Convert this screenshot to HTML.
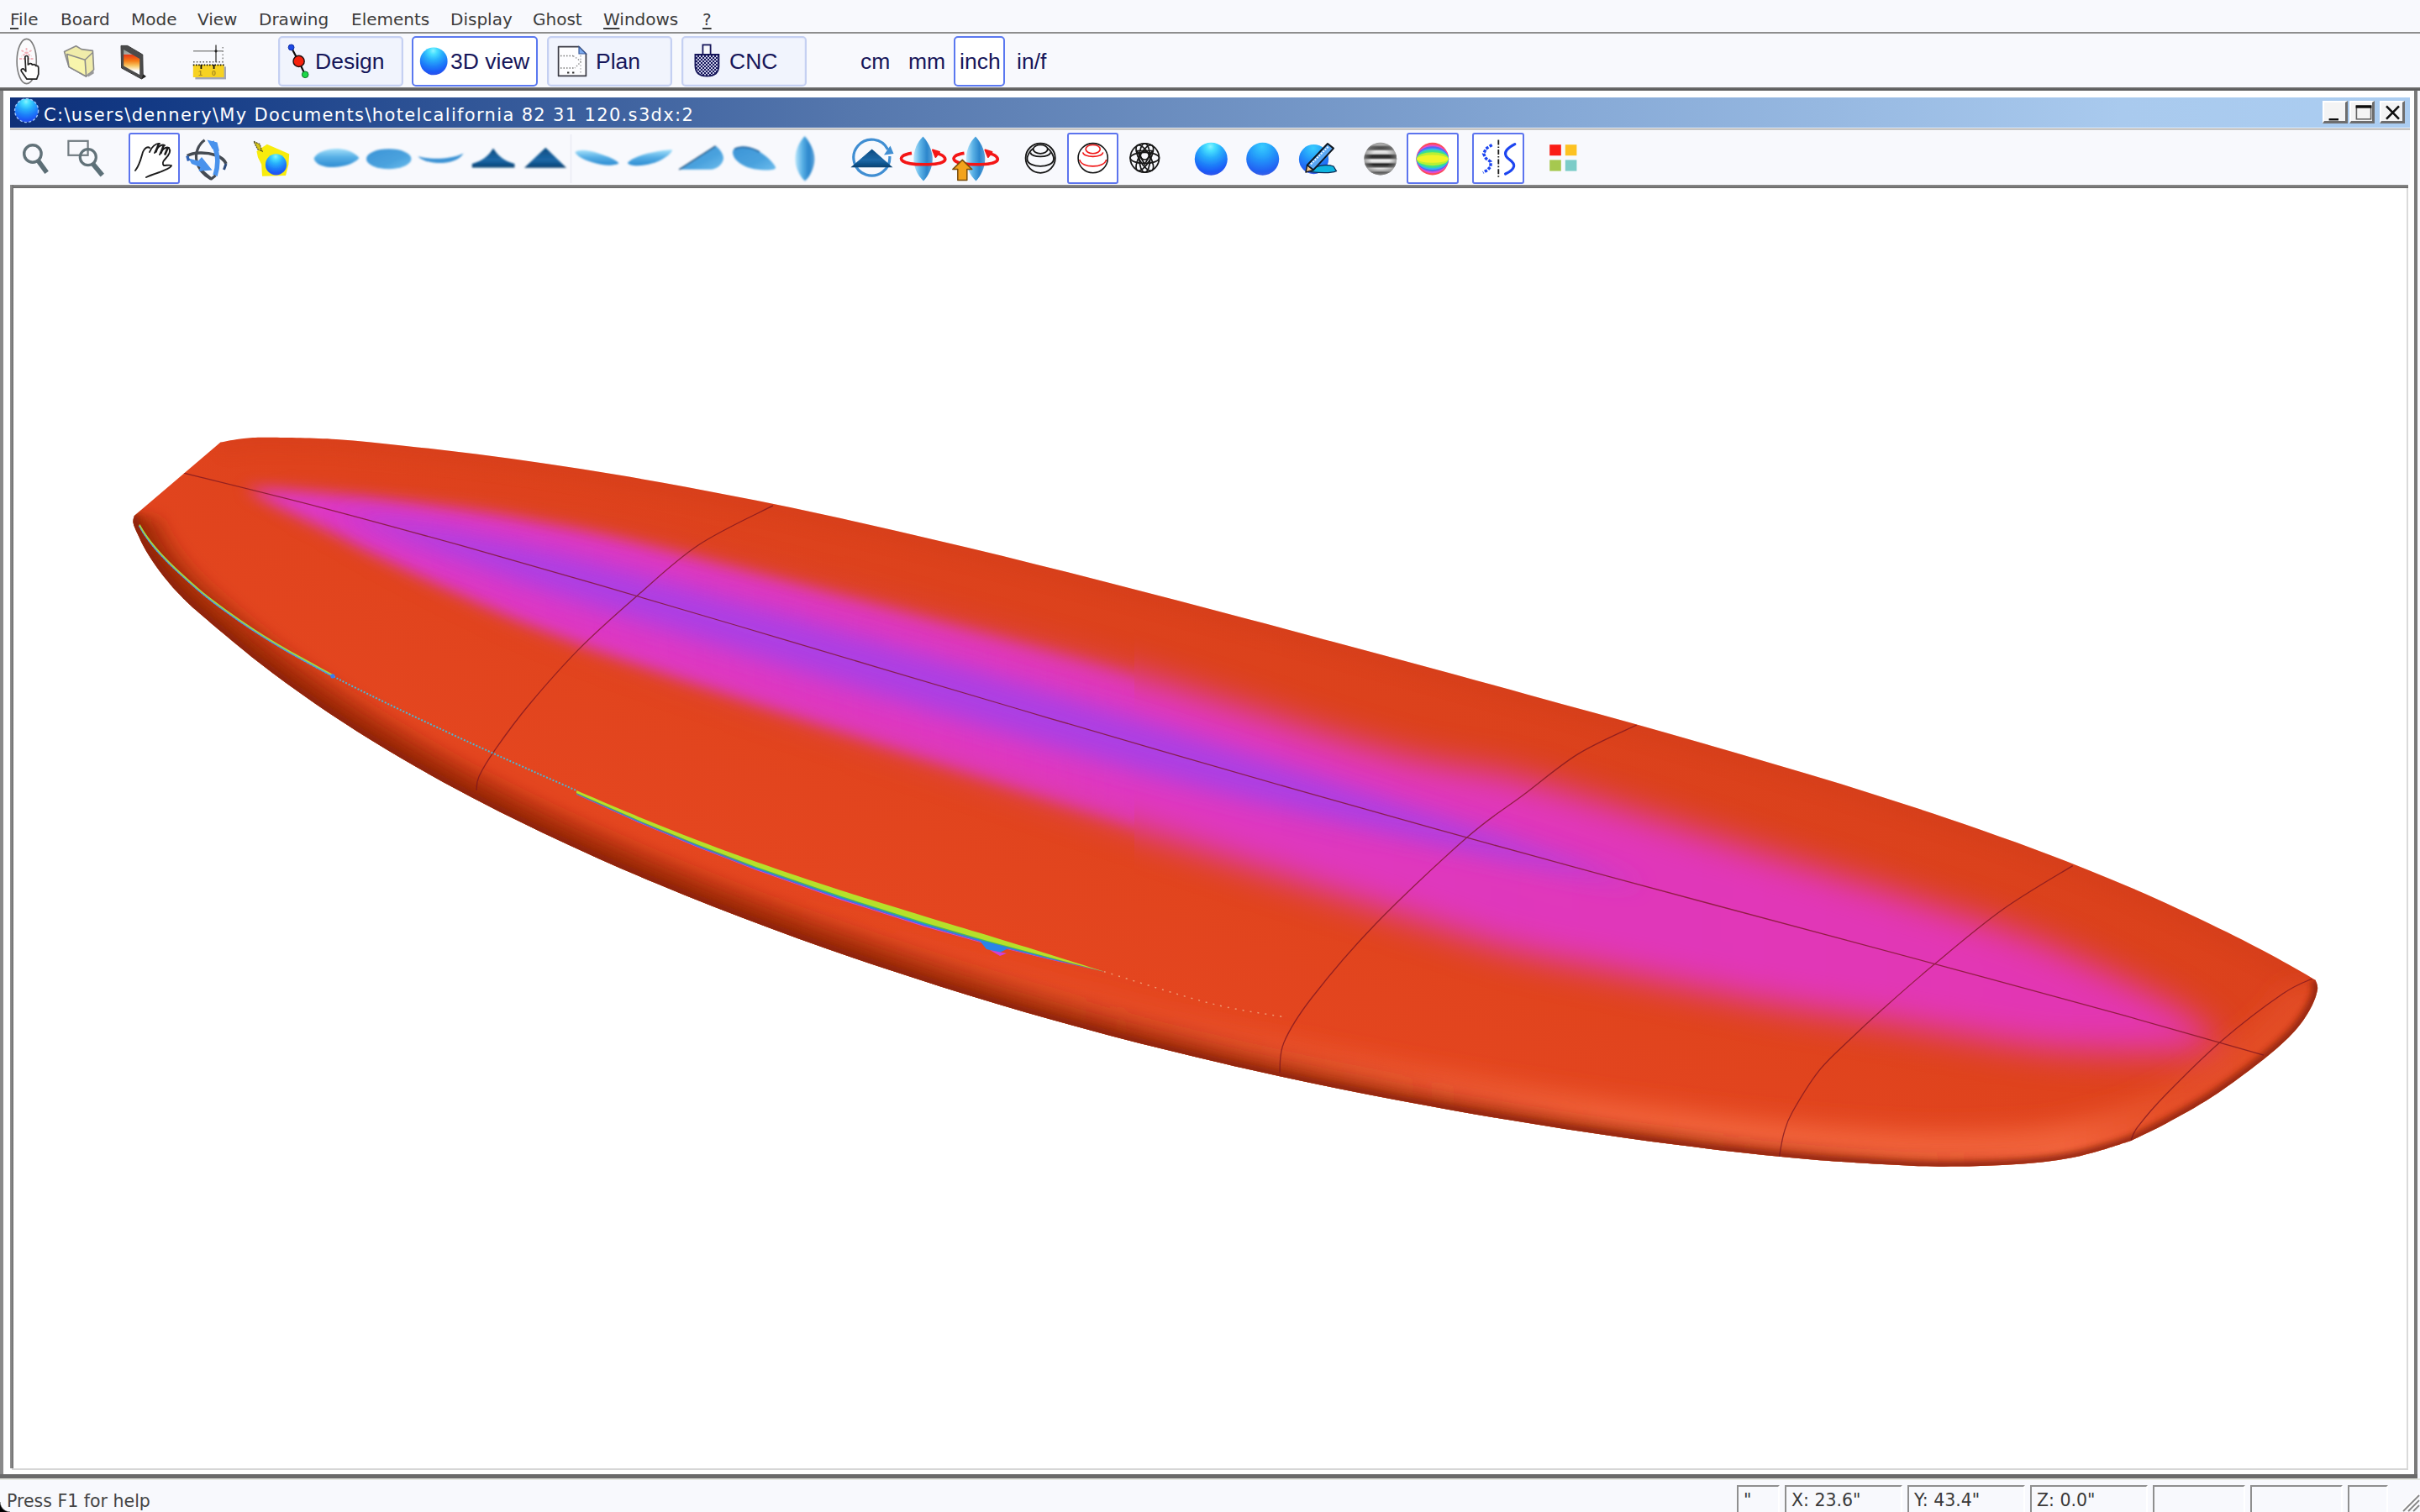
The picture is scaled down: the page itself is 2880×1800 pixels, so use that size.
<!DOCTYPE html>
<html lang="en">
<head>
<meta charset="utf-8">
<title>hotelcalifornia 82 31 120.s3dx - 3D view</title>
<style>
*{box-sizing:border-box;margin:0;padding:0}
html,body{width:2880px;height:1800px;overflow:hidden;background:#f8f9fd}
body{position:relative;font-family:"DejaVu Sans","Liberation Sans",sans-serif;color:#303030}
.abs{position:absolute}
#menubar{left:0;top:0;width:2880px;height:38px;background:#f8f9fd}
#menubar span{position:absolute;top:10px;font-size:20px;line-height:26px;color:#3c3c3c;white-space:nowrap}
#menubar u{text-decoration:underline;text-underline-offset:3px;text-decoration-thickness:2px}
#menusep{left:0;top:38px;width:2880px;height:2px;background:#8e8e8e}
#tb1{left:0;top:40px;width:2880px;height:64px;background:#f8f9fd}
.tbtn{position:absolute;top:43px;height:60px;border:2px solid #c5d0f2;border-radius:5px;background:#f1f4fd;box-shadow:inset 0 0 0 1px #e6ebfb}
.tbtn.sel{border:2px solid #5a78f0;background:#fff;box-shadow:none}
.tlabel{position:absolute;font-family:"Liberation Sans",sans-serif;font-size:26.5px;line-height:30px;color:#16165a;white-space:nowrap;top:58px}
#tb1sep{left:0;top:104px;width:2880px;height:4px;background:linear-gradient(#787878,#5c5c5c 60%,#6c6c6c)}
#frameL{left:0;top:108px;width:4px;height:1652px;background:#8a8a8a}
#frameR{left:2873px;top:108px;width:4px;height:1652px;background:#7a7a7a}
#frameB{left:0;top:1755px;width:2877px;height:5px;background:#6a6a6a}
#childbg{left:4px;top:108px;width:2869px;height:1647px;background:#fff}
#title{left:12px;top:116px;width:2856px;height:36px;background:linear-gradient(90deg,#0e3079 0%,#133a85 6%,#5577ad 35%,#86a9d6 65%,#a9caee 88%,#abcdf1 100%)}
#titletext{left:52px;top:123px;font-size:21px;line-height:28px;color:#fff;white-space:pre;letter-spacing:1.34px}
#titleline{left:12px;top:152px;width:2856px;height:3px;background:linear-gradient(#fff,#fff 34%,#9a9a9a 34%,#9a9a9a 67%,#dcdcdc 67%)}
.wbtn{position:absolute;top:120px;width:30px;height:27px;background:#f4f4f4;border-top:2px solid #fff;border-left:2px solid #fff;border-right:3px solid #6e6e6e;border-bottom:3px solid #6e6e6e}
#tb2{left:12px;top:155px;width:2856px;height:65px;background:#f8f9fd}
.selbox{position:absolute;top:158px;height:61px;border:2.5px solid #5c74ee;border-radius:3px;background:#fff}
#vpT{left:12px;top:220px;width:2854px;height:4px;background:linear-gradient(#8c8c8c,#686868)}
#vpL{left:12px;top:220px;width:4px;height:1528px;background:linear-gradient(90deg,#969696,#6c6c6c)}
#vpR{left:2864px;top:224px;width:2px;height:1526px;background:#dadada}
#vpB{left:14px;top:1748px;width:2852px;height:2px;background:#d6d6d6}
#vp{left:16px;top:224px;width:2848px;height:1524px;background:#fff;overflow:hidden}
#status{left:0;top:1762px;width:2880px;height:38px;background:#f8f9fd}
#statusline{left:0;top:1760px;width:2880px;height:2px;background:#e4e6e0}
#stext{left:8px;top:1773.5px;font-size:20.5px;line-height:26px;color:#444;white-space:nowrap}
.pane{position:absolute;top:1768px;height:32px;border-top:2px solid #8f8f8f;border-left:2px solid #8f8f8f;border-right:2px solid #fff;font-size:20.5px;line-height:26px;padding:3px 0 0 6px;color:#3a3a3a;white-space:nowrap;overflow:hidden}
#corner{left:0;top:1788px;width:12px;height:12px;background:radial-gradient(circle at 12px 0px,rgba(0,0,0,0) 11px,#000 12.5px)}
svg{position:absolute;overflow:visible}
</style>
</head>
<body>
<div id="menubar" class="abs">
<span style="left:12px"><u>F</u>ile</span>
<span style="left:72px">Board</span>
<span style="left:156px">Mode</span>
<span style="left:235px">View</span>
<span style="left:308px">Drawing</span>
<span style="left:418px">Elements</span>
<span style="left:536px">Display</span>
<span style="left:634px">Ghost</span>
<span style="left:718px"><u>W</u>indows</span>
<span style="left:836px"><u>?</u></span>
</div>
<div id="menusep" class="abs"></div>
<div id="tb1" class="abs"></div>
<div class="tbtn" style="left:331px;width:149px"></div>
<div class="tbtn sel" style="left:490px;width:150px"></div>
<div class="tbtn" style="left:651px;width:149px"></div>
<div class="tbtn" style="left:811px;width:149px"></div>
<div class="tbtn sel" style="left:1135px;width:61px"></div>
<div class="tlabel" style="left:375px">Design</div>
<div class="tlabel" style="left:536px">3D view</div>
<div class="tlabel" style="left:709px">Plan</div>
<div class="tlabel" style="left:868px">CNC</div>
<div class="tlabel" style="left:1024px">cm</div>
<div class="tlabel" style="left:1081px">mm</div>
<div class="tlabel" style="left:1142px">inch</div>
<div class="tlabel" style="left:1210px">in/f</div>
<div id="tb1sep" class="abs"></div>
<div id="childbg" class="abs"></div>
<div id="frameL" class="abs"></div>
<div id="frameR" class="abs"></div>
<div id="frameB" class="abs"></div>
<div id="title" class="abs"></div>
<div id="titletext" class="abs">C:\users\dennery\My Documents\hotelcalifornia 82 31 120.s3dx:2</div>
<div id="titleline" class="abs"></div>
<div class="wbtn" style="left:2764px"></div>
<div class="wbtn" style="left:2796px"></div>
<div class="wbtn" style="left:2832px"></div>
<div id="tb2" class="abs"></div>
<div class="selbox" style="left:153px;width:61px"></div>
<div class="selbox" style="left:1270px;width:61px"></div>
<div class="selbox" style="left:1674px;width:62px"></div>
<div class="selbox" style="left:1752px;width:62px"></div>
<div id="vpT" class="abs"></div>
<div id="vpL" class="abs"></div>
<div id="vpR" class="abs"></div>
<div id="vpB" class="abs"></div>
<div id="vp" class="abs"></div>
<div id="statusline" class="abs"></div>
<div id="status" class="abs"></div>
<div id="stext" class="abs">Press F1 for help</div>
<div class="pane" style="left:2067px;width:51px">&quot;</div>
<div class="pane" style="left:2124px;width:140px">X: 23.6&quot;</div>
<div class="pane" style="left:2270px;width:140px">Y: 43.4&quot;</div>
<div class="pane" style="left:2416px;width:140px">Z: 0.0&quot;</div>
<div class="pane" style="left:2562px;width:110px"></div>
<div class="pane" style="left:2678px;width:110px"></div>
<div class="pane" style="left:2794px;width:48px"></div>
<div id="corner" class="abs"></div>
<svg width="24" height="24" viewBox="0 0 24 24" style="left:2856px;top:1776px"><path d="M4 23 L23 4 M10 23 L23 10 M16 23 L23 16" stroke="#8a8a8a" stroke-width="2.200"/><path d="M2.500 22 L22 2.500 M8.500 22 L22 8.500 M14.500 22 L22 14.500" stroke="#ffffff" stroke-width="1.400"/></svg>
<svg id="board" width="2880" height="1800" viewBox="0 0 2880 1800" style="left:0;top:0">
<defs>
<clipPath id="bclip"><path d="M262.4 526.5 C267.0 525.8 280.1 523.0 290.0 522.0 C299.9 521.0 303.7 520.5 322.0 520.7 C340.3 520.9 373.1 521.2 400.0 522.9 C426.9 524.6 455.6 527.9 483.3 530.9 C511.1 533.8 538.9 537.0 566.7 540.6 C594.4 544.1 622.2 547.9 650.0 552.0 C677.8 556.1 705.6 560.4 733.3 565.1 C761.1 569.7 788.9 574.6 816.7 579.7 C844.4 584.9 872.2 590.3 900.0 595.8 C927.8 601.4 955.6 607.3 983.3 613.3 C1011.1 619.3 1038.9 625.5 1066.7 631.9 C1094.4 638.2 1122.2 644.8 1150.0 651.5 C1177.8 658.1 1205.6 665.0 1233.3 671.9 C1261.1 678.8 1288.9 685.8 1316.7 692.9 C1344.4 700.0 1372.2 707.3 1400.0 714.5 C1427.8 721.8 1455.6 729.1 1483.3 736.5 C1511.1 743.8 1538.9 751.2 1566.7 758.7 C1594.4 766.1 1622.2 773.6 1650.0 781.1 C1677.8 788.6 1705.6 796.1 1733.3 803.6 C1761.1 811.2 1788.9 818.8 1816.7 826.4 C1844.4 834.0 1872.2 841.6 1900.0 849.3 C1927.8 857.0 1955.6 864.7 1983.3 872.6 C2011.1 880.4 2038.9 888.3 2066.7 896.4 C2094.4 904.5 2122.2 912.6 2150.0 921.0 C2177.8 929.3 2205.6 937.8 2233.3 946.7 C2261.1 955.5 2288.9 964.4 2316.7 973.9 C2344.4 983.3 2372.2 992.9 2400.0 1003.1 C2427.8 1013.3 2455.6 1023.8 2483.3 1035.0 C2511.1 1046.1 2538.9 1057.7 2566.7 1070.2 C2594.4 1082.6 2625.0 1097.2 2650.0 1109.6 C2675.0 1121.9 2699.1 1134.9 2716.7 1144.4 C2734.3 1153.9 2749.1 1163.0 2755.6 1166.7 C2756.0 1168.6 2758.9 1172.5 2758.0 1178.0 C2757.1 1183.5 2754.6 1191.7 2750.0 1200.0 C2745.4 1208.3 2739.9 1217.6 2730.6 1227.8 C2721.3 1238.0 2710.3 1248.0 2694.0 1261.0 C2677.7 1274.0 2652.4 1292.8 2633.0 1305.6 C2613.6 1318.3 2594.0 1328.8 2577.8 1337.5 C2561.6 1346.2 2543.0 1354.6 2536.0 1358.0 C2530.0 1359.9 2511.6 1366.2 2500.0 1369.5 C2488.4 1372.8 2478.4 1375.7 2466.7 1378.0 C2455.0 1380.3 2443.9 1382.0 2430.0 1383.5 C2416.1 1385.0 2399.7 1386.2 2383.0 1387.0 C2366.3 1387.8 2347.5 1388.4 2330.0 1388.6 C2312.5 1388.8 2299.5 1388.8 2277.8 1388.0 C2256.1 1387.2 2224.2 1385.3 2200.0 1383.6 C2175.8 1382.0 2154.9 1380.3 2132.4 1378.2 C2109.9 1376.2 2087.4 1373.8 2064.8 1371.3 C2042.3 1368.8 2019.8 1366.0 1997.2 1363.1 C1974.7 1360.2 1952.2 1357.2 1929.7 1354.0 C1907.1 1350.8 1884.6 1347.4 1862.1 1344.0 C1839.5 1340.5 1817.0 1336.9 1794.5 1333.1 C1772.0 1329.4 1749.4 1325.5 1726.9 1321.5 C1704.4 1317.5 1681.8 1313.3 1659.3 1309.1 C1636.8 1304.8 1614.3 1300.3 1591.7 1295.7 C1569.2 1291.2 1546.7 1286.4 1524.1 1281.5 C1501.6 1276.6 1479.1 1271.6 1456.6 1266.3 C1434.0 1261.1 1411.5 1255.7 1389.0 1250.1 C1366.4 1244.6 1343.9 1238.8 1321.4 1232.9 C1298.9 1226.9 1276.3 1220.8 1253.8 1214.5 C1231.3 1208.2 1208.7 1201.7 1186.2 1195.0 C1163.7 1188.2 1141.1 1181.3 1118.6 1174.2 C1096.1 1167.1 1073.6 1159.8 1051.0 1152.3 C1028.5 1144.8 1006.0 1137.1 983.4 1129.2 C960.9 1121.2 938.4 1113.1 915.9 1104.7 C893.3 1096.3 870.8 1087.7 848.3 1078.9 C825.7 1070.0 803.2 1060.9 780.7 1051.5 C758.2 1042.1 735.6 1032.4 713.1 1022.4 C690.6 1012.3 668.0 1002.0 645.5 991.3 C623.0 980.5 600.5 969.5 577.9 957.8 C555.4 946.2 532.9 934.2 510.3 921.5 C487.8 908.9 465.3 895.7 442.8 881.8 C420.2 867.8 397.7 853.2 375.2 837.7 C352.6 822.1 330.1 805.8 307.6 788.3 C285.1 770.7 255.9 746.0 240.0 732.3 C224.1 718.6 220.4 714.8 212.0 706.0 C203.6 697.2 196.0 687.7 189.7 679.4 C183.4 671.1 178.3 663.2 174.0 656.0 C169.7 648.8 166.6 641.6 164.0 636.0 C161.4 630.4 159.3 626.1 158.6 622.4 C157.9 618.7 159.6 615.4 159.8 614.0 Z"/></clipPath>
<linearGradient id="deck" gradientUnits="userSpaceOnUse" x1="1500" y1="650" x2="1250" y2="1350">
<stop offset="0" stop-color="#da411c"/><stop offset="0.4" stop-color="#df431d"/><stop offset="0.75" stop-color="#e4461f"/><stop offset="1" stop-color="#e74a23"/>
</linearGradient>
<linearGradient id="bandg" gradientUnits="userSpaceOnUse" x1="300" y1="0" x2="2650" y2="0">
<stop offset="0" stop-color="#dc38c8"/><stop offset="0.5" stop-color="#de38c0"/><stop offset="1" stop-color="#e336b0"/>
</linearGradient>
<linearGradient id="hl" gradientUnits="userSpaceOnUse" x1="900" y1="0" x2="2760" y2="0">
<stop offset="0" stop-color="#f4683f" stop-opacity="0"/><stop offset="0.3" stop-color="#f4683f" stop-opacity="0.4"/><stop offset="0.6" stop-color="#f4683f" stop-opacity="0.85"/><stop offset="0.84" stop-color="#f4683f" stop-opacity="0.85"/><stop offset="0.9" stop-color="#f4683f" stop-opacity="0.3"/><stop offset="1" stop-color="#f4683f" stop-opacity="0.25"/>
</linearGradient>
<linearGradient id="dk" gradientUnits="userSpaceOnUse" x1="150" y1="0" x2="1900" y2="0">
<stop offset="0" stop-color="#8c2408" stop-opacity="0.55"/><stop offset="0.5" stop-color="#8c2408" stop-opacity="0.5"/><stop offset="1" stop-color="#8c2408" stop-opacity="0"/>
</linearGradient>
<linearGradient id="dk2" gradientUnits="userSpaceOnUse" x1="150" y1="0" x2="2450" y2="0">
<stop offset="0" stop-color="#8c2408" stop-opacity="0.5"/><stop offset="0.5" stop-color="#8c2408" stop-opacity="0.48"/><stop offset="0.8" stop-color="#8c2408" stop-opacity="0.4"/><stop offset="1" stop-color="#8c2408" stop-opacity="0"/>
</linearGradient>
<filter id="bl6" x="-10%" y="-30%" width="120%" height="160%"><feGaussianBlur stdDeviation="6"/></filter>
<filter id="vblur" filterUnits="userSpaceOnUse" x="-2000" y="300" width="6000" height="1300" color-interpolation-filters="sRGB">
<feGaussianBlur in="SourceGraphic" stdDeviation="9" result="b1"/>
<feGaussianBlur in="SourceGraphic" stdDeviation="21" result="b2"/>
<feFlood flood-color="#000" flood-opacity="1" x="-2000" y="300" width="3350" height="1300" result="f"/>
<feGaussianBlur in="f" stdDeviation="520 0" result="mA"/>
<feComposite in="b1" in2="mA" operator="in" result="p1"/>
<feComposite in="b2" in2="mA" operator="out" result="p2"/>
<feComposite in="p1" in2="p2" operator="arithmetic" k1="0" k2="1" k3="1" k4="0"/>
</filter>
<filter id="bl14" x="-10%" y="-30%" width="120%" height="160%"><feGaussianBlur stdDeviation="14"/></filter>
<filter id="bl18" x="-10%" y="-30%" width="120%" height="160%"><feGaussianBlur stdDeviation="16"/></filter>
<filter id="bl10" x="-10%" y="-30%" width="120%" height="160%"><feGaussianBlur stdDeviation="9"/></filter>
<filter id="bl4" x="-10%" y="-30%" width="120%" height="160%"><feGaussianBlur stdDeviation="3.5"/></filter>
</defs>
<path d="M262.4 526.5 C267.0 525.8 280.1 523.0 290.0 522.0 C299.9 521.0 303.7 520.5 322.0 520.7 C340.3 520.9 373.1 521.2 400.0 522.9 C426.9 524.6 455.6 527.9 483.3 530.9 C511.1 533.8 538.9 537.0 566.7 540.6 C594.4 544.1 622.2 547.9 650.0 552.0 C677.8 556.1 705.6 560.4 733.3 565.1 C761.1 569.7 788.9 574.6 816.7 579.7 C844.4 584.9 872.2 590.3 900.0 595.8 C927.8 601.4 955.6 607.3 983.3 613.3 C1011.1 619.3 1038.9 625.5 1066.7 631.9 C1094.4 638.2 1122.2 644.8 1150.0 651.5 C1177.8 658.1 1205.6 665.0 1233.3 671.9 C1261.1 678.8 1288.9 685.8 1316.7 692.9 C1344.4 700.0 1372.2 707.3 1400.0 714.5 C1427.8 721.8 1455.6 729.1 1483.3 736.5 C1511.1 743.8 1538.9 751.2 1566.7 758.7 C1594.4 766.1 1622.2 773.6 1650.0 781.1 C1677.8 788.6 1705.6 796.1 1733.3 803.6 C1761.1 811.2 1788.9 818.8 1816.7 826.4 C1844.4 834.0 1872.2 841.6 1900.0 849.3 C1927.8 857.0 1955.6 864.7 1983.3 872.6 C2011.1 880.4 2038.9 888.3 2066.7 896.4 C2094.4 904.5 2122.2 912.6 2150.0 921.0 C2177.8 929.3 2205.6 937.8 2233.3 946.7 C2261.1 955.5 2288.9 964.4 2316.7 973.9 C2344.4 983.3 2372.2 992.9 2400.0 1003.1 C2427.8 1013.3 2455.6 1023.8 2483.3 1035.0 C2511.1 1046.1 2538.9 1057.7 2566.7 1070.2 C2594.4 1082.6 2625.0 1097.2 2650.0 1109.6 C2675.0 1121.9 2699.1 1134.9 2716.7 1144.4 C2734.3 1153.9 2749.1 1163.0 2755.6 1166.7 C2756.0 1168.6 2758.9 1172.5 2758.0 1178.0 C2757.1 1183.5 2754.6 1191.7 2750.0 1200.0 C2745.4 1208.3 2739.9 1217.6 2730.6 1227.8 C2721.3 1238.0 2710.3 1248.0 2694.0 1261.0 C2677.7 1274.0 2652.4 1292.8 2633.0 1305.6 C2613.6 1318.3 2594.0 1328.8 2577.8 1337.5 C2561.6 1346.2 2543.0 1354.6 2536.0 1358.0 C2530.0 1359.9 2511.6 1366.2 2500.0 1369.5 C2488.4 1372.8 2478.4 1375.7 2466.7 1378.0 C2455.0 1380.3 2443.9 1382.0 2430.0 1383.5 C2416.1 1385.0 2399.7 1386.2 2383.0 1387.0 C2366.3 1387.8 2347.5 1388.4 2330.0 1388.6 C2312.5 1388.8 2299.5 1388.8 2277.8 1388.0 C2256.1 1387.2 2224.2 1385.3 2200.0 1383.6 C2175.8 1382.0 2154.9 1380.3 2132.4 1378.2 C2109.9 1376.2 2087.4 1373.8 2064.8 1371.3 C2042.3 1368.8 2019.8 1366.0 1997.2 1363.1 C1974.7 1360.2 1952.2 1357.2 1929.7 1354.0 C1907.1 1350.8 1884.6 1347.4 1862.1 1344.0 C1839.5 1340.5 1817.0 1336.9 1794.5 1333.1 C1772.0 1329.4 1749.4 1325.5 1726.9 1321.5 C1704.4 1317.5 1681.8 1313.3 1659.3 1309.1 C1636.8 1304.8 1614.3 1300.3 1591.7 1295.7 C1569.2 1291.2 1546.7 1286.4 1524.1 1281.5 C1501.6 1276.6 1479.1 1271.6 1456.6 1266.3 C1434.0 1261.1 1411.5 1255.7 1389.0 1250.1 C1366.4 1244.6 1343.9 1238.8 1321.4 1232.9 C1298.9 1226.9 1276.3 1220.8 1253.8 1214.5 C1231.3 1208.2 1208.7 1201.7 1186.2 1195.0 C1163.7 1188.2 1141.1 1181.3 1118.6 1174.2 C1096.1 1167.1 1073.6 1159.8 1051.0 1152.3 C1028.5 1144.8 1006.0 1137.1 983.4 1129.2 C960.9 1121.2 938.4 1113.1 915.9 1104.7 C893.3 1096.3 870.8 1087.7 848.3 1078.9 C825.7 1070.0 803.2 1060.9 780.7 1051.5 C758.2 1042.1 735.6 1032.4 713.1 1022.4 C690.6 1012.3 668.0 1002.0 645.5 991.3 C623.0 980.5 600.5 969.5 577.9 957.8 C555.4 946.2 532.9 934.2 510.3 921.5 C487.8 908.9 465.3 895.7 442.8 881.8 C420.2 867.8 397.7 853.2 375.2 837.7 C352.6 822.1 330.1 805.8 307.6 788.3 C285.1 770.7 255.9 746.0 240.0 732.3 C224.1 718.6 220.4 714.8 212.0 706.0 C203.6 697.2 196.0 687.7 189.7 679.4 C183.4 671.1 178.3 663.2 174.0 656.0 C169.7 648.8 166.6 641.6 164.0 636.0 C161.4 630.4 159.3 626.1 158.6 622.4 C157.9 618.7 159.6 615.4 159.8 614.0 Z" fill="url(#deck)"/>
<g clip-path="url(#bclip)">
<path d="M292.0 581.5 C298.3 581.6 312.0 581.0 330.0 582.1 C348.0 583.1 381.7 586.4 400.0 588.0 C418.3 589.6 416.7 589.2 440.0 591.9 C463.3 594.6 506.7 599.3 540.0 604.1 C573.3 608.9 596.7 611.9 640.0 620.6 C683.3 629.2 690.0 628.1 800.0 656.0 C910.0 683.9 1166.7 750.6 1300.0 787.9 C1433.3 825.3 1533.3 860.5 1600.0 880.2 C1666.7 900.0 1666.7 899.1 1700.0 906.4 C1733.3 913.7 1761.7 914.8 1800.0 923.9 C1838.3 933.1 1880.0 946.2 1930.0 961.4 C1980.0 976.7 2045.0 998.1 2100.0 1015.3 C2155.0 1032.4 2210.0 1048.4 2260.0 1064.2 C2310.0 1080.0 2363.3 1096.7 2400.0 1110.0 C2436.7 1123.2 2448.3 1129.1 2480.0 1143.8 C2511.7 1158.6 2562.5 1182.2 2590.0 1198.6 C2617.5 1214.9 2635.8 1234.9 2645.0 1242.2 C2635.8 1243.9 2617.5 1250.9 2590.0 1252.6 C2562.5 1254.2 2511.7 1253.3 2480.0 1251.8 C2448.3 1250.4 2436.7 1249.2 2400.0 1244.0 C2363.3 1238.7 2310.0 1228.5 2260.0 1220.2 C2210.0 1211.9 2155.0 1204.4 2100.0 1194.3 C2045.0 1184.1 1980.0 1169.8 1930.0 1159.4 C1880.0 1149.1 1838.3 1141.8 1800.0 1131.9 C1761.7 1122.1 1733.3 1111.0 1700.0 1100.4 C1666.7 1089.8 1666.7 1090.0 1600.0 1068.2 C1533.3 1046.5 1433.3 1013.6 1300.0 969.9 C1166.7 926.2 910.0 842.9 800.0 806.0 C690.0 769.1 683.3 765.4 640.0 748.6 C596.7 731.7 573.3 720.2 540.0 705.1 C506.7 690.0 463.3 669.2 440.0 657.9 C416.7 646.5 418.3 646.1 400.0 637.0 C381.7 627.9 348.0 612.3 330.0 603.1 C312.0 593.8 298.3 585.1 292.0 581.5 Z" fill="url(#bandg)" filter="url(#vblur)"/>
<path d="M400.0 609.0 C411.7 610.7 443.3 614.6 470.0 619.0 C496.7 623.5 521.7 627.6 560.0 635.7 C598.3 643.8 626.7 648.5 700.0 667.7 C773.3 687.0 900.0 722.5 1000.0 751.2 C1100.0 779.9 1216.7 814.7 1300.0 839.9 C1383.3 865.2 1433.3 881.4 1500.0 902.9 C1566.7 924.3 1641.7 949.2 1700.0 968.4 C1758.3 987.5 1806.7 1003.2 1850.0 1017.7 C1893.3 1032.2 1941.7 1049.3 1960.0 1055.6 C1941.7 1052.1 1893.3 1043.6 1850.0 1034.7 C1806.7 1025.8 1758.3 1015.5 1700.0 1002.4 C1641.7 989.2 1566.7 972.4 1500.0 955.9 C1433.3 939.3 1383.3 926.7 1300.0 902.9 C1216.7 879.2 1100.0 843.8 1000.0 813.2 C900.0 782.7 773.3 743.3 700.0 719.7 C626.7 696.1 598.3 685.3 560.0 671.7 C521.7 658.1 496.7 648.5 470.0 638.0 C443.3 627.6 411.7 613.8 400.0 609.0 Z" fill="#a840e6" filter="url(#bl14)" opacity="0.92"/>
<path d="M2755.6 1166.7 C2756.0 1168.6 2758.9 1172.5 2758.0 1178.0 C2757.1 1183.5 2754.6 1191.7 2750.0 1200.0 C2745.4 1208.3 2739.9 1217.6 2730.6 1227.8 C2721.3 1238.0 2710.3 1248.0 2694.0 1261.0 C2677.7 1274.0 2652.4 1292.8 2633.0 1305.6 C2613.6 1318.3 2594.0 1328.8 2577.8 1337.5 C2561.6 1346.2 2549.0 1352.7 2536.0 1358.0 C2523.0 1363.3 2511.6 1366.2 2500.0 1369.5 C2488.4 1372.8 2478.4 1375.7 2466.7 1378.0 C2455.0 1380.3 2443.9 1382.0 2430.0 1383.5 C2416.1 1385.0 2399.7 1386.2 2383.0 1387.0 C2366.3 1387.8 2347.5 1388.4 2330.0 1388.6 C2312.5 1388.8 2299.5 1388.8 2277.8 1388.0 C2256.1 1387.2 2224.2 1385.3 2200.0 1383.6 C2175.8 1382.0 2154.9 1380.3 2132.4 1378.2 C2109.9 1376.2 2087.4 1373.8 2064.8 1371.3 C2042.3 1368.8 2019.8 1366.0 1997.2 1363.1 C1974.7 1360.2 1952.2 1357.2 1929.7 1354.0 C1907.1 1350.8 1884.6 1347.4 1862.1 1344.0 C1839.5 1340.5 1817.0 1336.9 1794.5 1333.1 C1772.0 1329.4 1749.4 1325.5 1726.9 1321.5 C1704.4 1317.5 1681.8 1313.3 1659.3 1309.1 C1636.8 1304.8 1614.3 1300.3 1591.7 1295.7 C1569.2 1291.2 1546.7 1286.4 1524.1 1281.5 C1501.6 1276.6 1479.1 1271.6 1456.6 1266.3 C1434.0 1261.1 1411.5 1255.7 1389.0 1250.1 C1366.4 1244.6 1343.9 1238.8 1321.4 1232.9 C1298.9 1226.9 1276.3 1220.8 1253.8 1214.5 C1231.3 1208.2 1208.7 1201.7 1186.2 1195.0 C1163.7 1188.2 1141.1 1181.3 1118.6 1174.2 C1096.1 1167.1 1073.6 1159.8 1051.0 1152.3 C1028.5 1144.8 1006.0 1137.1 983.4 1129.2 C960.9 1121.2 938.4 1113.1 915.9 1104.7 C893.3 1096.3 870.8 1087.7 848.3 1078.9 C825.7 1070.0 803.2 1060.9 780.7 1051.5 C758.2 1042.1 735.6 1032.4 713.1 1022.4 C690.6 1012.3 668.0 1002.0 645.5 991.3 C623.0 980.5 600.5 969.5 577.9 957.8 C555.4 946.2 532.9 934.2 510.3 921.5 C487.8 908.9 465.3 895.7 442.8 881.8 C420.2 867.8 397.7 853.2 375.2 837.7 C352.6 822.1 330.1 805.8 307.6 788.3 C285.1 770.7 255.9 746.0 240.0 732.3 C224.1 718.6 220.4 714.8 212.0 706.0 C203.6 697.2 196.0 687.7 189.7 679.4 C183.4 671.1 178.3 663.2 174.0 656.0 C169.7 648.8 166.6 641.6 164.0 636.0 C161.4 630.4 159.3 626.1 158.6 622.4 C157.9 618.7 159.6 615.4 159.8 614.0" fill="none" stroke="url(#hl)" stroke-width="84" filter="url(#bl14)"/>
<path d="M2277.8 1388.0 C2264.8 1387.3 2224.2 1385.3 2200.0 1383.6 C2175.8 1382.0 2154.9 1380.3 2132.4 1378.2 C2109.9 1376.2 2087.4 1373.8 2064.8 1371.3 C2042.3 1368.8 2019.8 1366.0 1997.2 1363.1 C1974.7 1360.2 1952.2 1357.2 1929.7 1354.0 C1907.1 1350.8 1884.6 1347.4 1862.1 1344.0 C1839.5 1340.5 1817.0 1336.9 1794.5 1333.1 C1772.0 1329.4 1749.4 1325.5 1726.9 1321.5 C1704.4 1317.5 1681.8 1313.3 1659.3 1309.1 C1636.8 1304.8 1614.3 1300.3 1591.7 1295.7 C1569.2 1291.2 1546.7 1286.4 1524.1 1281.5 C1501.6 1276.6 1479.1 1271.6 1456.6 1266.3 C1434.0 1261.1 1411.5 1255.7 1389.0 1250.1 C1366.4 1244.6 1343.9 1238.8 1321.4 1232.9 C1298.9 1226.9 1276.3 1220.8 1253.8 1214.5 C1231.3 1208.2 1208.7 1201.7 1186.2 1195.0 C1163.7 1188.2 1141.1 1181.3 1118.6 1174.2 C1096.1 1167.1 1073.6 1159.8 1051.0 1152.3 C1028.5 1144.8 1006.0 1137.1 983.4 1129.2 C960.9 1121.2 938.4 1113.1 915.9 1104.7 C893.3 1096.3 870.8 1087.7 848.3 1078.9 C825.7 1070.0 803.2 1060.9 780.7 1051.5 C758.2 1042.1 735.6 1032.4 713.1 1022.4 C690.6 1012.3 668.0 1002.0 645.5 991.3 C623.0 980.5 600.5 969.5 577.9 957.8 C555.4 946.2 532.9 934.2 510.3 921.5 C487.8 908.9 465.3 895.7 442.8 881.8 C420.2 867.8 397.7 853.2 375.2 837.7 C352.6 822.1 330.1 805.8 307.6 788.3 C285.1 770.7 255.9 746.0 240.0 732.3 C224.1 718.6 220.4 714.8 212.0 706.0 C203.6 697.2 196.0 687.7 189.7 679.4 C183.4 671.1 178.3 663.2 174.0 656.0 C169.7 648.8 166.6 641.6 164.0 636.0 C161.4 630.4 159.3 626.1 158.6 622.4 C157.9 618.7 159.6 615.4 159.8 614.0" fill="none" stroke="url(#dk)" stroke-width="62" filter="url(#bl10)"/>
<path d="M2536.0 1358.0 C2530.0 1359.9 2511.6 1366.2 2500.0 1369.5 C2488.4 1372.8 2478.4 1375.7 2466.7 1378.0 C2455.0 1380.3 2443.9 1382.0 2430.0 1383.5 C2416.1 1385.0 2399.7 1386.2 2383.0 1387.0 C2366.3 1387.8 2347.5 1388.4 2330.0 1388.6 C2312.5 1388.8 2299.5 1388.8 2277.8 1388.0 C2256.1 1387.2 2224.2 1385.3 2200.0 1383.6 C2175.8 1382.0 2154.9 1380.3 2132.4 1378.2 C2109.9 1376.2 2087.4 1373.8 2064.8 1371.3 C2042.3 1368.8 2019.8 1366.0 1997.2 1363.1 C1974.7 1360.2 1952.2 1357.2 1929.7 1354.0 C1907.1 1350.8 1884.6 1347.4 1862.1 1344.0 C1839.5 1340.5 1817.0 1336.9 1794.5 1333.1 C1772.0 1329.4 1749.4 1325.5 1726.9 1321.5 C1704.4 1317.5 1681.8 1313.3 1659.3 1309.1 C1636.8 1304.8 1614.3 1300.3 1591.7 1295.7 C1569.2 1291.2 1546.7 1286.4 1524.1 1281.5 C1501.6 1276.6 1479.1 1271.6 1456.6 1266.3 C1434.0 1261.1 1411.5 1255.7 1389.0 1250.1 C1366.4 1244.6 1343.9 1238.8 1321.4 1232.9 C1298.9 1226.9 1276.3 1220.8 1253.8 1214.5 C1231.3 1208.2 1208.7 1201.7 1186.2 1195.0 C1163.7 1188.2 1141.1 1181.3 1118.6 1174.2 C1096.1 1167.1 1073.6 1159.8 1051.0 1152.3 C1028.5 1144.8 1006.0 1137.1 983.4 1129.2 C960.9 1121.2 938.4 1113.1 915.9 1104.7 C893.3 1096.3 870.8 1087.7 848.3 1078.9 C825.7 1070.0 803.2 1060.9 780.7 1051.5 C758.2 1042.1 735.6 1032.4 713.1 1022.4 C690.6 1012.3 668.0 1002.0 645.5 991.3 C623.0 980.5 600.5 969.5 577.9 957.8 C555.4 946.2 532.9 934.2 510.3 921.5 C487.8 908.9 465.3 895.7 442.8 881.8 C420.2 867.8 397.7 853.2 375.2 837.7 C352.6 822.1 330.1 805.8 307.6 788.3 C285.1 770.7 255.9 746.0 240.0 732.3 C224.1 718.6 220.4 714.8 212.0 706.0 C203.6 697.2 196.0 687.7 189.7 679.4 C183.4 671.1 178.3 663.2 174.0 656.0 C169.7 648.8 166.6 641.6 164.0 636.0 C161.4 630.4 159.3 626.1 158.6 622.4 C157.9 618.7 159.6 615.4 159.8 614.0" fill="none" stroke="url(#dk2)" stroke-width="34" filter="url(#bl6)"/>
<path d="M2755.6 1166.7 C2756.0 1168.6 2758.9 1172.5 2758.0 1178.0 C2757.1 1183.5 2754.6 1191.7 2750.0 1200.0 C2745.4 1208.3 2739.9 1217.6 2730.6 1227.8 C2721.3 1238.0 2710.3 1248.0 2694.0 1261.0 C2677.7 1274.0 2652.4 1292.8 2633.0 1305.6 C2613.6 1318.3 2594.0 1328.8 2577.8 1337.5 C2561.6 1346.2 2549.0 1352.7 2536.0 1358.0 C2523.0 1363.3 2511.6 1366.2 2500.0 1369.5 C2488.4 1372.8 2478.4 1375.7 2466.7 1378.0 C2455.0 1380.3 2443.9 1382.0 2430.0 1383.5 C2416.1 1385.0 2399.7 1386.2 2383.0 1387.0 C2366.3 1387.8 2347.5 1388.4 2330.0 1388.6 C2312.5 1388.8 2299.5 1388.8 2277.8 1388.0 C2256.1 1387.2 2224.2 1385.3 2200.0 1383.6 C2175.8 1382.0 2154.9 1380.3 2132.4 1378.2 C2109.9 1376.2 2087.4 1373.8 2064.8 1371.3 C2042.3 1368.8 2019.8 1366.0 1997.2 1363.1 C1974.7 1360.2 1952.2 1357.2 1929.7 1354.0 C1907.1 1350.8 1884.6 1347.4 1862.1 1344.0 C1839.5 1340.5 1817.0 1336.9 1794.5 1333.1 C1772.0 1329.4 1749.4 1325.5 1726.9 1321.5 C1704.4 1317.5 1681.8 1313.3 1659.3 1309.1 C1636.8 1304.8 1614.3 1300.3 1591.7 1295.7 C1569.2 1291.2 1546.7 1286.4 1524.1 1281.5 C1501.6 1276.6 1479.1 1271.6 1456.6 1266.3 C1434.0 1261.1 1411.5 1255.7 1389.0 1250.1 C1366.4 1244.6 1343.9 1238.8 1321.4 1232.9 C1298.9 1226.9 1276.3 1220.8 1253.8 1214.5 C1231.3 1208.2 1208.7 1201.7 1186.2 1195.0 C1163.7 1188.2 1141.1 1181.3 1118.6 1174.2 C1096.1 1167.1 1073.6 1159.8 1051.0 1152.3 C1028.5 1144.8 1006.0 1137.1 983.4 1129.2 C960.9 1121.2 938.4 1113.1 915.9 1104.7 C893.3 1096.3 870.8 1087.7 848.3 1078.9 C825.7 1070.0 803.2 1060.9 780.7 1051.5 C758.2 1042.1 735.6 1032.4 713.1 1022.4 C690.6 1012.3 668.0 1002.0 645.5 991.3 C623.0 980.5 600.5 969.5 577.9 957.8 C555.4 946.2 532.9 934.2 510.3 921.5 C487.8 908.9 465.3 895.7 442.8 881.8 C420.2 867.8 397.7 853.2 375.2 837.7 C352.6 822.1 330.1 805.8 307.6 788.3 C285.1 770.7 255.9 746.0 240.0 732.3 C224.1 718.6 220.4 714.8 212.0 706.0 C203.6 697.2 196.0 687.7 189.7 679.4 C183.4 671.1 178.3 663.2 174.0 656.0 C169.7 648.8 166.6 641.6 164.0 636.0 C161.4 630.4 159.3 626.1 158.6 622.4 C157.9 618.7 159.6 615.4 159.8 614.0" fill="none" stroke="#8c2408" stroke-width="13" filter="url(#bl4)" opacity="0.85"/>
<path d="M262.4 526.5 C267.0 525.8 280.1 523.0 290.0 522.0 C299.9 521.0 303.7 520.5 322.0 520.7 C340.3 520.9 373.1 521.2 400.0 522.9 C426.9 524.6 455.6 527.9 483.3 530.9 C511.1 533.8 538.9 537.0 566.7 540.6 C594.4 544.1 622.2 547.9 650.0 552.0 C677.8 556.1 705.6 560.4 733.3 565.1 C761.1 569.7 788.9 574.6 816.7 579.7 C844.4 584.9 872.2 590.3 900.0 595.8 C927.8 601.4 955.6 607.3 983.3 613.3 C1011.1 619.3 1038.9 625.5 1066.7 631.9 C1094.4 638.2 1122.2 644.8 1150.0 651.5 C1177.8 658.1 1205.6 665.0 1233.3 671.9 C1261.1 678.8 1288.9 685.8 1316.7 692.9 C1344.4 700.0 1372.2 707.3 1400.0 714.5 C1427.8 721.8 1455.6 729.1 1483.3 736.5 C1511.1 743.8 1538.9 751.2 1566.7 758.7 C1594.4 766.1 1622.2 773.6 1650.0 781.1 C1677.8 788.6 1705.6 796.1 1733.3 803.6 C1761.1 811.2 1788.9 818.8 1816.7 826.4 C1844.4 834.0 1872.2 841.6 1900.0 849.3 C1927.8 857.0 1955.6 864.7 1983.3 872.6 C2011.1 880.4 2038.9 888.3 2066.7 896.4 C2094.4 904.5 2122.2 912.6 2150.0 921.0 C2177.8 929.3 2205.6 937.8 2233.3 946.7 C2261.1 955.5 2288.9 964.4 2316.7 973.9 C2344.4 983.3 2372.2 992.9 2400.0 1003.1 C2427.8 1013.3 2455.6 1023.8 2483.3 1035.0 C2511.1 1046.1 2538.9 1057.7 2566.7 1070.2 C2594.4 1082.6 2625.0 1097.2 2650.0 1109.6 C2675.0 1121.9 2699.1 1134.9 2716.7 1144.4 C2734.3 1153.9 2749.1 1163.0 2755.6 1166.7" fill="none" stroke="#c83a18" stroke-width="30" filter="url(#bl10)" opacity="0.2"/>
</g>
<g fill="none" stroke="#7a1420" stroke-width="1.3" opacity="0.75" clip-path="url(#bclip)">
<path d="M217.7 562.9 C245.2 569.8 327.8 589.9 382.8 604.3 C437.8 618.7 492.8 633.9 547.9 649.2 C602.9 664.6 657.9 680.5 713.0 696.4 C768.0 712.4 823.0 728.7 878.0 745.0 C933.1 761.3 988.1 777.7 1043.1 794.1 C1098.2 810.4 1153.2 826.8 1208.2 843.0 C1263.2 859.3 1318.3 875.4 1373.3 891.4 C1428.3 907.4 1483.4 923.2 1538.4 938.9 C1593.4 954.6 1648.5 970.0 1703.5 985.4 C1758.5 1000.7 1813.5 1015.8 1868.6 1030.8 C1923.6 1045.8 1978.6 1060.7 2033.7 1075.5 C2088.7 1090.3 2143.7 1105.0 2198.7 1119.7 C2253.8 1134.5 2308.8 1149.2 2363.8 1164.1 C2418.9 1179.0 2473.9 1193.9 2528.9 1209.2 C2583.9 1224.6 2666.5 1248.3 2694.0 1256.1"/>
<path d="M920.0 601.9 C905.2 609.8 858.3 630.8 831.0 649.0 C803.7 667.2 779.6 690.7 756.0 711.3 C732.4 731.9 710.4 751.2 689.4 772.4 C668.4 793.6 646.6 818.7 630.0 838.5 C613.4 858.3 600.0 877.1 590.0 891.4 C580.0 905.7 573.8 916.2 570.0 924.5 C566.2 932.8 567.5 938.2 567.0 941.0"/>
<path d="M1947.8 863.0 C1936.2 868.8 1900.6 883.6 1878.0 897.6 C1855.4 911.6 1834.0 930.5 1812.0 947.0 C1790.0 963.5 1775.2 971.3 1746.0 996.8 C1716.8 1022.3 1667.8 1068.1 1637.0 1100.0 C1606.2 1131.9 1579.2 1164.5 1561.0 1188.0 C1542.8 1211.5 1534.3 1226.2 1528.0 1241.0 C1521.7 1255.8 1523.8 1271.0 1523.0 1277.0"/>
<path d="M2466.7 1030.6 C2452.8 1039.3 2410.6 1063.3 2383.0 1083.0 C2355.4 1102.7 2324.5 1129.3 2301.0 1148.8 C2277.5 1168.3 2258.8 1185.0 2242.0 1200.0 C2225.2 1215.0 2212.8 1226.6 2200.0 1239.0 C2187.2 1251.4 2176.2 1260.2 2165.0 1274.4 C2153.8 1288.6 2140.0 1311.6 2133.0 1324.0 C2126.0 1336.4 2125.6 1340.2 2123.0 1349.0 C2120.4 1357.8 2118.4 1372.3 2117.5 1377.0"/>
<path d="M2752.0 1165.0 C2746.1 1168.0 2734.7 1170.7 2716.7 1183.0 C2698.7 1195.3 2667.2 1219.0 2644.0 1239.0 C2620.8 1259.0 2594.5 1285.7 2577.8 1302.8 C2561.1 1319.9 2551.0 1332.5 2544.0 1341.7 C2537.0 1350.9 2537.3 1355.3 2536.0 1358.0"/>
</g>
<path d="M165.9 625.8 C166.9 627.5 169.7 632.5 172.0 636.0 C174.3 639.5 176.7 642.8 180.0 647.0 C183.3 651.2 187.1 655.8 192.0 661.0 C196.9 666.2 201.5 671.1 209.5 678.5 C217.5 685.9 230.1 697.4 240.0 705.7 C249.9 713.9 259.0 720.7 269.0 727.9 C279.0 735.2 288.2 741.6 300.0 749.3 C311.8 757.0 324.0 764.7 340.0 774.0 C356.0 783.2 376.0 794.4 396.0 804.9 C416.0 815.4 437.7 826.2 460.0 837.1 C482.3 848.1 509.0 860.6 530.0 870.5 C551.0 880.4 567.7 888.0 586.0 896.4 C604.3 904.8 623.3 913.3 640.0 920.8 C656.7 928.2 678.3 937.7 686.0 941.1" fill="none" stroke="#48b8d8" stroke-width="2" stroke-dasharray="2 2"/>
<path d="M165.9 625.8 C166.9 627.5 169.7 632.5 172.0 636.0 C174.3 639.5 176.7 642.8 180.0 647.0 C183.3 651.2 187.1 655.8 192.0 661.0 C196.9 666.2 201.5 671.1 209.5 678.5 C217.5 685.9 230.1 697.4 240.0 705.7 C249.9 713.9 259.0 720.7 269.0 727.9 C279.0 735.2 288.2 741.6 300.0 749.3 C311.8 757.0 324.0 764.7 340.0 774.0 C356.0 783.2 386.7 799.7 396.0 804.9" fill="none" stroke="#4a9ae8" stroke-width="2.2"/>
<path d="M165.9 624.6 C166.9 626.3 169.7 631.3 172.0 634.8 C174.3 638.3 176.7 641.6 180.0 645.8 C183.3 650.0 187.1 654.5 192.0 659.8 C196.9 665.0 201.5 669.9 209.5 677.3 C217.5 684.7 230.1 696.2 240.0 704.5 C249.9 712.7 259.0 719.5 269.0 726.7 C279.0 734.0 288.2 740.4 300.0 748.1 C311.8 755.8 324.0 763.5 340.0 772.8 C356.0 782.0 386.7 798.5 396.0 803.7" fill="none" stroke="#a8dc38" stroke-width="1.6"/>
<circle cx="396" cy="804.9" r="2.6" fill="#3a7cf0"/>
<path d="M1314.0 1156.7 C1328.3 1161.1 1375.7 1176.0 1400.0 1183.1 C1424.3 1190.1 1438.7 1194.4 1460.0 1199.0 C1481.3 1203.6 1516.7 1208.7 1528.0 1210.6" fill="none" stroke="#f0b088" stroke-width="1.5" stroke-dasharray="2 7" opacity="0.8"/>
<path d="M686.0 945.5 C698.3 951.0 736.0 968.2 760.0 978.6 C784.0 988.9 806.7 998.3 830.0 1007.7 C853.3 1017.1 871.7 1024.5 900.0 1034.8 C928.3 1045.2 966.7 1058.6 1000.0 1069.8 C1033.3 1080.9 1071.0 1092.9 1100.0 1101.7 C1129.0 1110.5 1149.0 1116.1 1174.0 1122.8 C1199.0 1129.5 1226.7 1136.2 1250.0 1141.8 C1273.3 1147.5 1303.3 1154.2 1314.0 1156.7 L1314.0 1156.7 L1250.0 1142.5 L1174.0 1124.1 L1100.0 1103.2 L1000.0 1071.2 L900.0 1036.0 L830.0 1008.7 L760.0 979.4 L686.0 946.1 Z" fill="#c848e0"/>
<path d="M686.0 944.6 C698.3 950.0 736.0 967.0 760.0 977.3 C784.0 987.6 806.7 996.9 830.0 1006.2 C853.3 1015.5 871.7 1022.8 900.0 1033.0 C928.3 1043.3 966.7 1056.7 1000.0 1067.7 C1033.3 1078.8 1071.0 1090.6 1100.0 1099.4 C1129.0 1108.3 1149.0 1113.9 1174.0 1120.8 C1199.0 1127.7 1226.7 1134.8 1250.0 1140.7 C1273.3 1146.7 1303.3 1154.0 1314.0 1156.7 L1314.0 1156.7 L1250.0 1141.9 L1174.0 1123.0 L1100.0 1101.9 L1000.0 1070.0 L900.0 1035.0 L830.0 1007.9 L760.0 978.7 L686.0 945.6 Z" fill="#2f7cf0"/>
<path d="M686.0 943.9 C698.3 949.3 736.0 966.1 760.0 976.3 C784.0 986.5 806.7 995.8 830.0 1005.0 C853.3 1014.2 871.7 1021.4 900.0 1031.6 C928.3 1041.8 966.7 1055.1 1000.0 1066.1 C1033.3 1077.1 1071.0 1088.8 1100.0 1097.7 C1129.0 1106.6 1149.0 1112.3 1174.0 1119.3 C1199.0 1126.3 1226.7 1133.7 1250.0 1139.9 C1273.3 1146.1 1303.3 1153.9 1314.0 1156.7 L1314.0 1156.7 L1250.0 1140.9 L1174.0 1121.0 L1100.0 1099.7 L1000.0 1067.9 L900.0 1033.2 L830.0 1006.3 L760.0 977.4 L686.0 944.7 Z" fill="#30c46c"/>
<path d="M686.0 941.1 C698.3 946.3 736.0 962.5 760.0 972.4 C784.0 982.3 806.7 991.3 830.0 1000.2 C853.3 1009.2 871.7 1016.1 900.0 1026.0 C928.3 1035.9 966.7 1048.9 1000.0 1059.7 C1033.3 1070.4 1071.0 1081.8 1100.0 1090.7 C1129.0 1099.6 1149.0 1105.5 1174.0 1113.1 C1199.0 1120.8 1226.7 1129.3 1250.0 1136.5 C1273.3 1143.8 1303.3 1153.3 1314.0 1156.7 L1314.0 1156.7 L1250.0 1140.1 L1174.0 1119.7 L1100.0 1098.2 L1000.0 1066.6 L900.0 1032.0 L830.0 1005.3 L760.0 976.6 L686.0 944.1 Z" fill="#b6e02a"/>
<path d="M1166 1120 L1200 1129 L1190 1134 L1174 1130 Z" fill="#2a84e8"/>
<path d="M1178 1131 L1198 1135 L1190 1138 Z" fill="#d040d8"/>
</svg>
<svg id="icons" width="2880" height="232" viewBox="0 0 2880 232" style="left:0;top:0">
<defs>
<radialGradient id="gsph" cx="0.48" cy="0.12" r="0.95">
<stop offset="0" stop-color="#8af2ff"/><stop offset="0.14" stop-color="#48e0ff"/><stop offset="0.36" stop-color="#28b0fc"/><stop offset="0.6" stop-color="#1e80f9"/><stop offset="0.82" stop-color="#1c58f6"/><stop offset="0.94" stop-color="#3456e6"/><stop offset="1" stop-color="#5866d6"/>
</radialGradient>
<radialGradient id="gsph2" cx="0.48" cy="0.12" r="0.95">
<stop offset="0" stop-color="#38ccff"/><stop offset="0.3" stop-color="#28a8fb"/><stop offset="0.55" stop-color="#2084f8"/><stop offset="0.8" stop-color="#2060f2"/><stop offset="0.93" stop-color="#3a5ce4"/><stop offset="1" stop-color="#5c68d4"/>
</radialGradient>
<linearGradient id="glens" x1="0" y1="0" x2="0" y2="1">
<stop offset="0" stop-color="#a4e0fa"/><stop offset="0.45" stop-color="#58b0e6"/><stop offset="1" stop-color="#2e8cd2"/>
</linearGradient>
<linearGradient id="glens2" x1="0" y1="0" x2="1" y2="1">
<stop offset="0" stop-color="#3c94d6"/><stop offset="0.6" stop-color="#4aa2de"/><stop offset="1" stop-color="#6cbcec"/>
</linearGradient>
<linearGradient id="gvl" x1="0" y1="0" x2="1" y2="0">
<stop offset="0" stop-color="#b8e6fb"/><stop offset="0.35" stop-color="#5cb2e6"/><stop offset="0.7" stop-color="#2c86cc"/><stop offset="1" stop-color="#5aa2d8"/>
</linearGradient>
<linearGradient id="gpk" x1="0" y1="0" x2="0" y2="1">
<stop offset="0" stop-color="#0c4a80"/><stop offset="0.6" stop-color="#1c68a6"/><stop offset="0.8" stop-color="#0f548e"/><stop offset="1" stop-color="#0a426f"/>
</linearGradient>
<linearGradient id="gflame" x1="0" y1="0" x2="0" y2="1">
<stop offset="0" stop-color="#8c9a94"/><stop offset="0.18" stop-color="#a8aca8"/><stop offset="0.2" stop-color="#e83818"/><stop offset="0.45" stop-color="#f47c14"/><stop offset="0.65" stop-color="#f8c868"/><stop offset="0.85" stop-color="#ffffff"/><stop offset="1" stop-color="#f4f4f4"/>
</linearGradient>
<linearGradient id="ggray" x1="0" y1="0" x2="0" y2="1">
<stop offset="0" stop-color="#d0d0d0"/><stop offset="0.06" stop-color="#e8e8e8"/><stop offset="0.13" stop-color="#3a3a3a"/><stop offset="0.2" stop-color="#505050"/><stop offset="0.26" stop-color="#ececec"/><stop offset="0.33" stop-color="#d8d8d8"/><stop offset="0.4" stop-color="#262626"/><stop offset="0.47" stop-color="#3c3c3c"/><stop offset="0.53" stop-color="#f0f0f0"/><stop offset="0.6" stop-color="#dcdcdc"/><stop offset="0.66" stop-color="#262626"/><stop offset="0.73" stop-color="#404040"/><stop offset="0.79" stop-color="#e4e4e4"/><stop offset="0.86" stop-color="#c4c4c4"/><stop offset="0.92" stop-color="#3c3c3c"/><stop offset="1" stop-color="#8c8c8c"/>
</linearGradient>
<linearGradient id="grain" x1="0" y1="0" x2="0" y2="1">
<stop offset="0" stop-color="#ff5a6e"/><stop offset="0.1" stop-color="#e850c8"/><stop offset="0.19" stop-color="#5060f4"/><stop offset="0.27" stop-color="#30b8f0"/><stop offset="0.35" stop-color="#40e090"/><stop offset="0.45" stop-color="#c8f030"/><stop offset="0.52" stop-color="#f4f428"/><stop offset="0.6" stop-color="#b4ee34"/><stop offset="0.7" stop-color="#3cdc98"/><stop offset="0.78" stop-color="#30a8f0"/><stop offset="0.86" stop-color="#6458f0"/><stop offset="0.93" stop-color="#f048b0"/><stop offset="1" stop-color="#ff4848"/>
</linearGradient>
<radialGradient id="gedge" cx="0.5" cy="0.5" r="0.5">
<stop offset="0.55" stop-color="#808080" stop-opacity="0"/><stop offset="0.9" stop-color="#808080" stop-opacity="0.55"/><stop offset="1" stop-color="#909090" stop-opacity="0.8"/>
</radialGradient>
<radialGradient id="gshade" cx="0.5" cy="0.5" r="0.5">
<stop offset="0.7" stop-color="#ffffff" stop-opacity="0"/><stop offset="1" stop-color="#ffffff" stop-opacity="0.55"/>
</radialGradient>
<filter id="ib" x="-20%" y="-20%" width="140%" height="140%"><feGaussianBlur stdDeviation="0.7"/></filter>
<filter id="ib2" x="-20%" y="-20%" width="140%" height="140%"><feGaussianBlur stdDeviation="1.1"/></filter>
</defs>

<!-- ===== toolbar 1 ===== -->
<g filter="url(#ib)">
<!-- board + hand -->
<ellipse cx="31.7" cy="73" rx="11.6" ry="26.6" fill="#fbfbfd" stroke="#7c7c7c" stroke-width="1.6"/>
<g stroke="#f4b4bc" stroke-width="1.800" fill="none" stroke-dasharray="3 1.500"><path d="M31.5 57v12M25.5 60l12 7M37.5 60l-12 7M23 70h17"/></g>
<path d="M29.8 67.5 q1.9 -2 3.6 0 v9.5 l2.6 -1.4 q2 -.2 2.2 1.6 l2.3 -.6 q1.8 0 2 1.8 l1.7 0 q1.6 .4 1.6 2.4 v7.4 l-2.2 6 h-11.6 l-6.6 -9.4 q-.8 -2 1 -2.8 q1.6 -.4 2.6 1 l1.8 2 z" fill="#fff" stroke="#222" stroke-width="1.7" stroke-linejoin="round"/>
<!-- folder -->
<path d="M76.5 61.5 L90.5 54.8 L97 58.6 L110.4 60.4 L111.6 83 L102.6 91 L82 79.6 Z" fill="#f0ecaa" stroke="#8a8a8a" stroke-width="1.6" stroke-linejoin="round"/>
<path d="M79.8 64.6 L101.2 71.2 L102.6 91 L82 79.6 Z" fill="#f8f5ac" stroke="#8a8a8a" stroke-width="1.6" stroke-linejoin="round"/>
<path d="M101.2 71.2 L110.4 62.5" stroke="#8a8a8a" stroke-width="1.4" fill="none"/>
<path d="M104 88 L111.6 84.5 L111.6 87.5 L105 91.5Z" fill="#9a9a9a"/>
<!-- save disk -->
<path d="M144 54.4 L151.8 54.4 L169.8 65 L170.2 88.4 L173.4 91 L168.4 94 L144.6 81 Z" fill="#4c4c4c" stroke="#3c3c3c" stroke-width="1"/>
<path d="M147.2 59 L166.2 70 L166.2 89 L147.2 78.4 Z" fill="url(#gflame)"/>
<path d="M168.4 94 L173.4 91 L170.2 88.4Z" fill="#222"/>
<!-- ruler -->
<rect x="232.4" y="79.4" width="36.6" height="15" fill="#a4a6b4"/>
<rect x="229.8" y="77" width="36.8" height="15" fill="#f7d222"/>
<path d="M229.8 77.4h36.8" stroke="#111" stroke-width="1.8" stroke-dasharray="1.6 1.6"/>
<path d="M239.4 77v5M254.6 77v5" stroke="#111" stroke-width="1.8"/>
<path d="M230 60.8h35.6" stroke="#8e8e8e" stroke-width="1.6"/>
<path d="M257 53.6v20.4" stroke="#5a5a5a" stroke-width="1.6"/>
<circle cx="257" cy="60.8" r="1.6" fill="#222"/>
<path d="M230 73.8h36" stroke="#555" stroke-width="1.6" stroke-dasharray="1.6 2.2"/>
<path d="M265.2 56v18" stroke="#8c8c8c" stroke-width="1.6" stroke-dasharray="1.6 2.6"/>
</g>
<text x="236" y="90" font-family="Liberation Sans,sans-serif" font-size="9" font-weight="700" fill="#a88a20" filter="url(#ib)">1</text>
<text x="252" y="90" font-family="Liberation Sans,sans-serif" font-size="9" font-weight="700" fill="#a88a20" filter="url(#ib)">0</text>

<!-- Design icon -->
<g filter="url(#ib)">
<path d="M346.6 56.5 L355.5 72.9 L363 88.7" stroke="#111" stroke-width="2.2" fill="none"/>
<circle cx="346.6" cy="56.4" r="3.4" fill="#1c48e6" stroke="#0c2aa0" stroke-width="1"/>
<circle cx="355.6" cy="72.9" r="6.6" fill="#f6200c" stroke="#201010" stroke-width="1.4"/>
<circle cx="363.2" cy="88.8" r="3.8" fill="#1ed848" stroke="#0c7024" stroke-width="1"/>
</g>
<!-- 3D view sphere -->
<circle cx="516.2" cy="72.9" r="16.4" fill="url(#gsph)" filter="url(#ib)"/>
<!-- Plan icon -->
<g filter="url(#ib)">
<path d="M664.6 55.6 H689 L697.4 64 V90.4 H664.6 Z" fill="#fdfdff" stroke="#3a3a44" stroke-width="1.7" stroke-linejoin="round"/>
<path d="M689 55.6 V64 H697.4 Z" fill="#7aa8ee" stroke="#3a5a9a" stroke-width="1.2"/>
<path d="M667 66.5 H682 M667 81 H684" stroke="#777" stroke-width="1.3" stroke-dasharray="1.5 2"/>
<path d="M682 66.5 q6 3.5 9 7 q-3 4 -7 7.500" stroke="#888" stroke-width="1.3" fill="none" stroke-dasharray="1.5 2"/>
<path d="M691 66 V88" stroke="#999" stroke-width="1.2" stroke-dasharray="1.4 2.4"/>
<path d="M675 86.6 h2.4 M681 86.6 h2.4" stroke="#333" stroke-width="2"/>
</g>
<!-- CNC icon -->
<g filter="url(#ib)">
<rect x="836.4" y="53.4" width="9.2" height="11.6" fill="#f8f9fd" stroke="#16165a" stroke-width="1.8"/>
<path d="M827.4 65 H855.4 V78 Q855.4 90.6 841.4 90.6 Q827.4 90.6 827.4 78 Z" fill="#c8cae6" stroke="#16165a" stroke-width="1.8"/>
<path d="M827.4 65 H855.4 V78 Q855.4 90.6 841.4 90.6 Q827.4 90.6 827.4 78 Z" fill="url(#chk)"/>
</g>
<pattern id="chk" width="4" height="4" patternUnits="userSpaceOnUse"><rect width="2" height="2" fill="#16165a"/><rect x="2" y="2" width="2" height="2" fill="#16165a"/></pattern>

<!-- ===== title bar ===== -->
<circle cx="31.6" cy="131.6" r="14" fill="url(#gsph)" stroke="#9ec8ff" stroke-width="1.4" stroke-dasharray="3 2.4" filter="url(#ib)"/>
<g filter="url(#ib)">
<path d="M2771.6 142.2h11.4" stroke="#111" stroke-width="2.4"/>
<rect x="2804.4" y="126.4" width="17.2" height="15.4" fill="none" stroke="#666" stroke-width="1.6"/>
<path d="M2803.6 127h18.8" stroke="#111" stroke-width="3.4"/>
<path d="M2840 126.400l15 15.200M2855 126.400l-15 15.200" stroke="#111" stroke-width="2.600"/>
</g>

<!-- ===== toolbar 2 ===== -->
<g filter="url(#ib)">
<!-- magnifier -->
<circle cx="38.900" cy="183" r="10.200" fill="#f8f9fd" stroke="#627279" stroke-width="3.400"/>
<path d="M45.600 191.600L55.600 205.400" stroke="#5c6e76" stroke-width="5.600"/>
<!-- zoom rect -->
<rect x="81.400" y="167.800" width="23.200" height="17" fill="none" stroke="#727c82" stroke-width="2.200"/>
<circle cx="104.800" cy="187.200" r="9.500" fill="none" stroke="#627279" stroke-width="3.200"/>
<path d="M110.800 195.400L121.800 208.600" stroke="#5c7078" stroke-width="5.600"/>
<!-- hand -->
<g fill="none" stroke="#1a1a1a" stroke-width="1.9" stroke-linecap="round" stroke-linejoin="round">
<path d="M161 203 C166 197 168 188 170 181 C172 176 176 174 178 176"/>
<path d="M178 181 C180 175 186 170 190 171"/>
<path d="M184 182 C186 176 192 171 196 173"/>
<path d="M190 184 C192 179 197 174 201 176"/>
<path d="M201 176 C204 180 200 186 196 190 C194 192 193 195 195 197 C198 197 202 196 204 197 C204 200 196 202 190 205 C184 207 178 209 174 211"/>
<path d="M188.500 172.500l-3 8M194.500 174l-3 8M199.500 176.500l-3 7" stroke-width="2.6"/>
</g>
<!-- rotate 3D -->
<g fill="none" stroke-linejoin="round">
<path d="M243.600 166.800 C236 172 232 182 234 192 C236 200 242 208 251 213" stroke="#454b53" stroke-width="3.200"/>
<path d="M222.800 185.500 C230 181 246 181 256 184.500 C262 186.600 267 190 269 195" stroke="#454b53" stroke-width="3.600"/>
<path d="M269 195 l-2.500 7" stroke="#2c4a7c" stroke-width="3"/>
<path d="M252 169 C259 178 261 194 256 209" stroke="#4a92ec" stroke-width="5.600"/>
<path d="M246.500 166.500 L258.500 169.500 L261 180 L252.500 177 Z" fill="#4a92ec"/>
<path d="M224.500 188.500 L236 191.500 L240 187 L252.500 202.500 L236.500 204 L238.500 199 L228 195 Z" fill="#4a92ec"/>
<path d="M222.800 185.500 L224.500 191.500" stroke="#2f62b4" stroke-width="3.400"/>
<path d="M241 204 L251.500 213 L256.500 209" stroke="#454b53" stroke-width="3"/>
</g>
<!-- light -->
<path d="M305.400 180 L317.800 171.700 L344.200 183.300 L343.400 195.700 L340 209 L312 209.700 L311.200 195.700 L307 187.400 Z" fill="#f8ec10"/>
<path d="M302 168.400 L309 171.500 L312 180 L306.500 177.500 Z" fill="#d4c418" stroke="#4a4620" stroke-width="1.200" stroke-dasharray="2 1"/>
<circle cx="328.500" cy="195.900" r="12.600" fill="url(#gsph)"/>
</g>
<!-- board view icons -->
<g filter="url(#ib2)">
<path d="M373.600 188.500 C378 178 400 174.500 412 178.500 C420 181 425 185 427.400 188 C423 194 412 198 398 199 C386 199.500 375 196 373.600 188.500 Z" fill="url(#glens)"/>
<ellipse cx="462.700" cy="189.200" rx="26.700" ry="12" fill="url(#glens2)"/>
<path d="M497.400 186 C510 190 536 190.500 551.600 182.500 C546 192 532 194.500 520 194 C510 193.500 501 190.500 497.400 186 Z" fill="#3a92d4"/>
<path d="M561.800 199.600 L561.800 195 C574 192 582 185 587 176.600 C592 185 600 192 612.400 195 L612.400 199.600 Z" fill="url(#gpk)"/>
<path d="M624 199.700 L649.300 175.800 L674 199.700 Z" fill="url(#gpk)"/>
<path d="M684.500 181 C690 177.500 700 178.500 712 182.500 C724 186.500 733 190 736.500 194.500 C730 198 716 197 704 193 C694 190 686 185.500 684.500 181 Z" fill="url(#glens)"/>
<path d="M746.700 194 C752 188 764 184 776 181.500 C788 179 796 178 800.200 178.400 C798 184 788 191 776 194.500 C764 198 750 198.500 746.700 194 Z" fill="url(#glens)"/>
<path d="M808.200 201.800 L851.600 173.800 C858 178 862 186 860.800 190 C859 197 852 201.500 846 201.800 Z" fill="url(#glens2)"/>
<path d="M808.200 201.800 L851.600 173.800" stroke="#1c4a78" stroke-width="1.4" fill="none"/>
<path d="M872 181 C872 175 884 173 894 176 C906 180 918 190 923 199 C923.500 202 918 202.600 910 202.400 C898 202 888 200 880 194 C875 190 872 186 872 181 Z" fill="url(#glens2)"/>
<path d="M874 177.500 C882 173.500 894 175 904 181" stroke="#1c5a94" stroke-width="1.6" fill="none"/>
<path d="M957.800 162 C966 172 969.600 182 969.400 190 C969 200 964 210 958 215.600 C950 208 946.400 198 946.400 189 C946.400 179 951 169 957.800 162 Z" fill="url(#gvl)"/>
</g>
<path d="M679.500 160v58" stroke="#e9ebf4" stroke-width="1.4"/>
<!-- rotate icons -->
<g filter="url(#ib)">
<path d="M1056.600 178 A21.500 21.500 0 1 0 1058.800 186" fill="none" stroke="#3f8ed2" stroke-width="3.200"/>
<path d="M1052 184.500 l11.500 -1.500 l-4 -9.500 z" fill="#3f8ed2"/>
<path d="M1012.400 199.200 L1037.700 177.600 L1062.400 199.200 Z" fill="url(#gpk)"/>
<!-- lens with red ring -->
<path d="M1098.500 162.400 C1107 172 1110 182 1109.800 190 C1109.500 200 1105 209 1099 215.400 C1091 208 1087.300 198 1087.300 189 C1087.300 179 1091.500 169 1098.500 162.400 Z" fill="url(#gvl)"/>
<path d="M1113 182.500 C1124 184 1126 189 1124 191.500 C1119 197 1082 197.500 1074 191.500 C1070 188 1074 184 1085 182.400" fill="none" stroke="#f41414" stroke-width="3.600"/>
<path d="M1110 178.500 l8 2.500 l-4.500 6 z" fill="#f41414" stroke="#f41414" stroke-width="2" stroke-linejoin="round"/>
<path d="M1161 162.400 C1169.500 172 1172.500 182 1172.300 190 C1172 200 1167.500 209 1161.500 215.400 C1153.500 208 1149.800 198 1149.800 189 C1149.800 179 1154 169 1161 162.400 Z" fill="url(#gvl)"/>
<path d="M1175.500 182.500 C1186.500 184 1188.500 189 1186.500 191.500 C1181.500 197 1144.500 197.500 1136.500 191.500 C1132.500 188 1136.500 184 1147.500 182.400" fill="none" stroke="#f41414" stroke-width="3.600"/>
<path d="M1172.500 178.500 l8 2.500 l-4.500 6 z" fill="#f41414" stroke="#f41414" stroke-width="2" stroke-linejoin="round"/>
<path d="M1145.300 190.400 L1156.800 201.600 L1150.800 201.600 L1150.800 214.600 L1139.800 214.600 L1139.800 201.600 L1133.800 201.600 Z" fill="#f3a31e" stroke="#7a4e0c" stroke-width="1.500" stroke-linejoin="round"/>
<!-- wire cups -->
<g fill="none" stroke="#141414" stroke-width="1.800">
<circle cx="1238.200" cy="188.200" r="17.600"/>
<ellipse cx="1238.200" cy="177.600" rx="8.600" ry="5.200"/>
<path d="M1226.400 181.400 C1226 188 1250.400 188 1250 181.400"/>
<path d="M1222.400 190 C1224 200.500 1252.400 200.500 1254 190"/>
<path d="M1229.800 176.600 C1225 180 1222 186 1222.400 190 M1246.600 176.600 C1251.400 180 1254.400 186 1254 190"/>
</g>
<g fill="none" stroke="#f01818" stroke-width="1.600">
<ellipse cx="1300.700" cy="177.600" rx="8.600" ry="5.200"/>
<path d="M1288.900 181.400 C1288.500 188 1312.900 188 1312.500 181.400"/>
<path d="M1284.900 190 C1286.500 200.500 1314.900 200.500 1316.500 190"/>
</g>
<g fill="none" stroke="#141414" stroke-width="1.600">
<circle cx="1300.700" cy="188.200" r="17.600"/>
</g>
<g fill="none" stroke="#141414" stroke-width="1.700">
<circle cx="1362.300" cy="188" r="17.200"/>
<ellipse cx="1362.300" cy="188" rx="17.200" ry="6.500"/>
<ellipse cx="1362.300" cy="188" rx="6.500" ry="17.200"/>
<ellipse cx="1362.300" cy="188" rx="17.200" ry="6.500" transform="rotate(60 1362.300 188)"/>
<ellipse cx="1362.300" cy="188" rx="17.200" ry="6.500" transform="rotate(-60 1362.300 188)"/>
<path d="M1353 179.500 L1371.600 179.500 L1362.300 195.500 Z"/>
<circle cx="1362.300" cy="185" r="5"/>
</g>
<!-- spheres -->
<circle cx="1441.300" cy="189.200" r="19.500" fill="url(#gsph)"/>
<circle cx="1502.700" cy="189.200" r="19.500" fill="url(#gsph2)"/>
<circle cx="1563.500" cy="189.600" r="17.600" fill="url(#gsph2)"/>
<path d="M1566 199 C1572 196 1582 196 1587 198 L1590.400 203.600 C1584 206.500 1572 206 1560 204.600 Z" fill="#10b4e0" stroke="#0c2c54" stroke-width="1.200"/>
<path d="M1555.600 196.800 L1580 171 L1587 176.600 L1563 202.400 Z" fill="#5aa8f4" stroke="#101820" stroke-width="2" stroke-linejoin="round"/>
<path d="M1560 195.500 L1580.800 174.500" stroke="#e8f4ff" stroke-width="2.200" stroke-dasharray="2 1.400"/>
<path d="M1555.600 196.800 L1563 202.400 L1554 205 Z" fill="#f4c890" stroke="#101820" stroke-width="1.400" stroke-linejoin="round"/>
<circle cx="1642.800" cy="189.200" r="19.400" fill="url(#ggray)"/>
<circle cx="1642.800" cy="189.200" r="19.400" fill="url(#gedge)"/>
<g>
<circle cx="1704.800" cy="189.200" r="19.400" fill="#fc4c58"/>
<ellipse cx="1704.800" cy="189.200" rx="19.300" ry="17" fill="#e44cd0"/>
<ellipse cx="1704.800" cy="189.200" rx="19.200" ry="15" fill="#5468f4"/>
<ellipse cx="1704.800" cy="189.200" rx="19.100" ry="12.800" fill="#34b4f0"/>
<ellipse cx="1704.800" cy="189.200" rx="19" ry="10.600" fill="#3ce08c"/>
<ellipse cx="1704.800" cy="189.200" rx="18.900" ry="8" fill="#b8f034"/>
<ellipse cx="1704.800" cy="189.200" rx="18.600" ry="4.600" fill="#f2f42a"/>
</g>
<!-- S | S -->
<path d="M1775.600 172.500 L1768.400 177 L1765.600 183 L1768.400 188.600 L1774 192.600 L1774 198.400 L1770 202.600 L1765 205.400" fill="none" stroke="#1c44f0" stroke-width="3.400" stroke-dasharray="3.400 1.600"/>
<path d="M1783.300 166.400 V212" stroke="#1a1a1a" stroke-width="1.800" stroke-dasharray="6 2 1.600 2"/>
<path d="M1802.800 171.600 C1794 176 1789.600 181 1792.400 186 C1795 190.500 1802.600 192 1801.600 198 C1800.800 202 1796 205 1791.600 207" fill="none" stroke="#1c44f0" stroke-width="3.200" stroke-linecap="round"/>
<!-- squares -->
<rect x="1844.200" y="172.200" width="13.600" height="13" fill="#fa1a12"/>
<rect x="1862.800" y="172.200" width="13.600" height="13" fill="#fdc224"/>
<rect x="1844.200" y="190.400" width="13.600" height="13.200" fill="#a6c850"/>
<rect x="1862.800" y="190.400" width="13.600" height="13.200" fill="#7cccc8"/>
</g>
</svg>

</body>
</html>
